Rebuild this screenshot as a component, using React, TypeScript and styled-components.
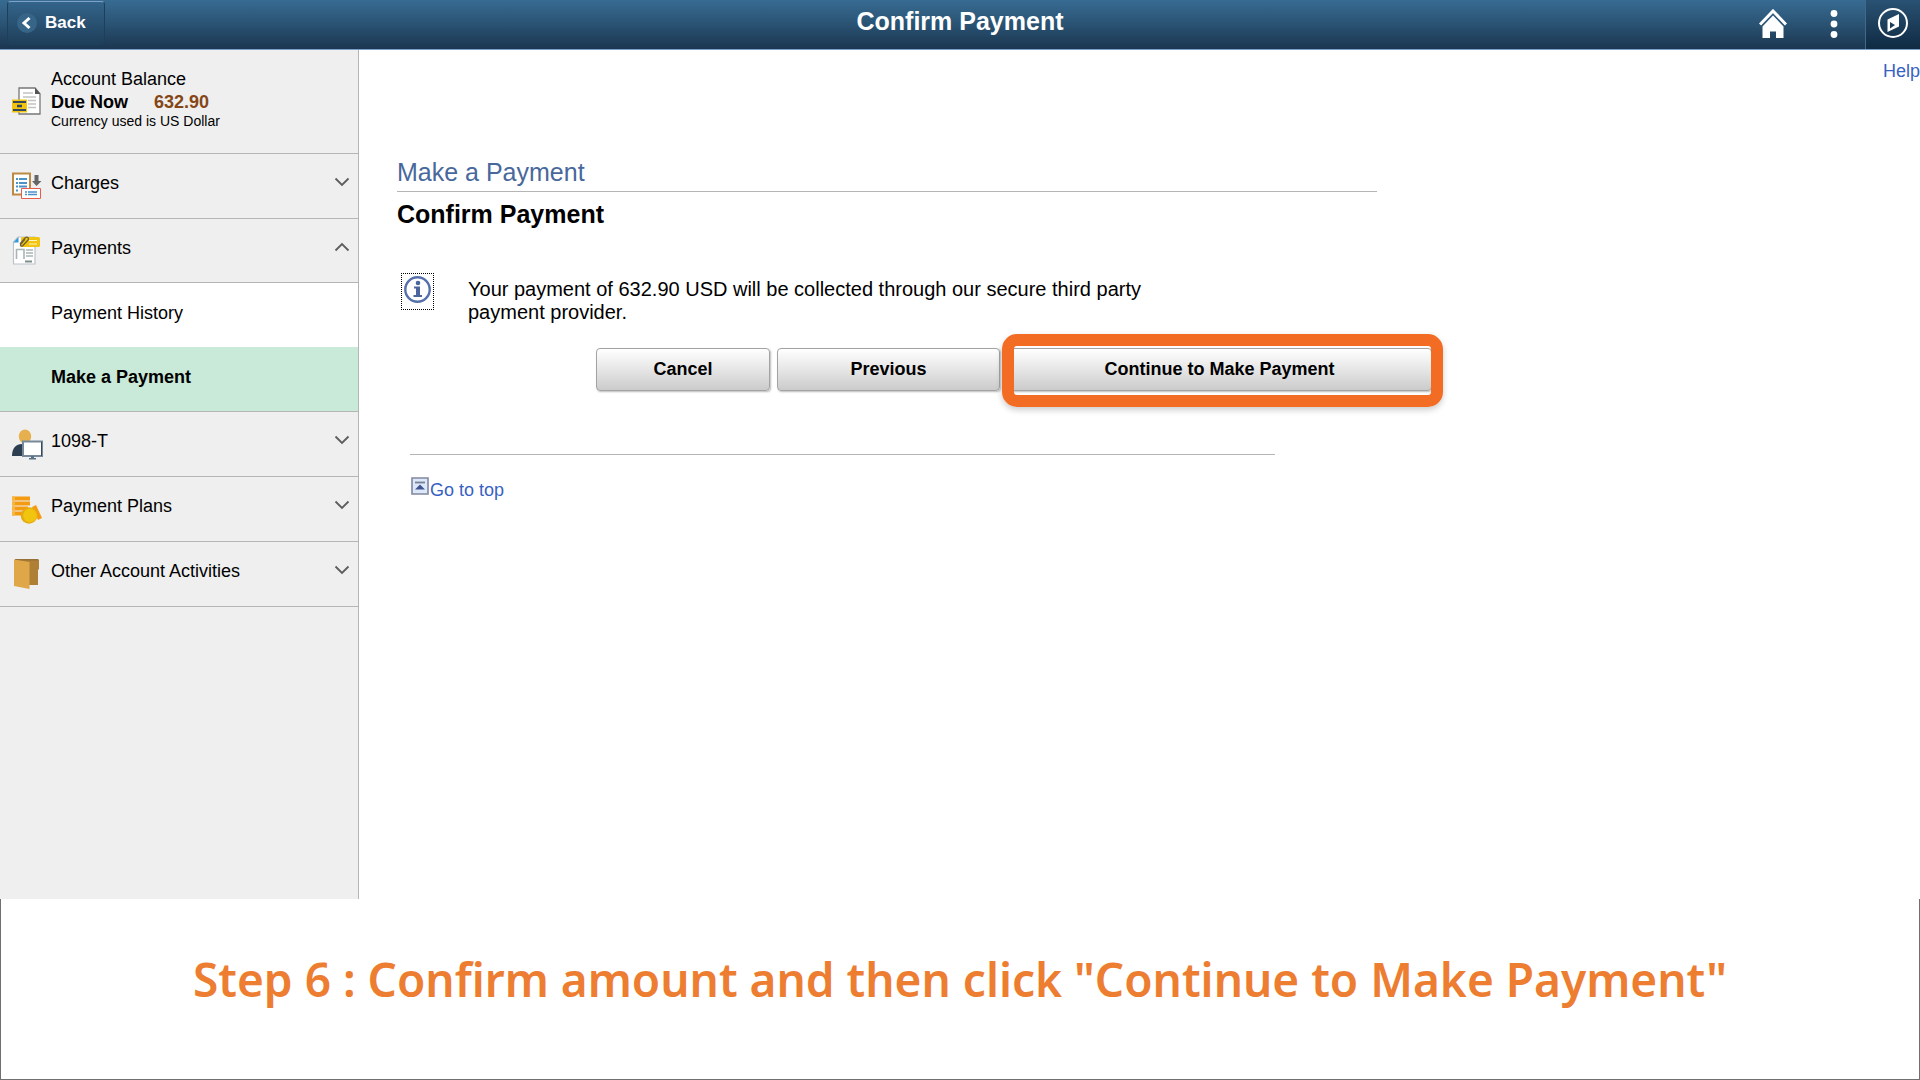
import React from "react";
import styled, { createGlobalStyle } from "styled-components";

const GlobalStyle = createGlobalStyle`
  *, *::before, *::after { box-sizing: border-box; }
  body {
    margin: 0;
    background: #fff;
    color: #000;
    font-family: "Liberation Sans", Arial, sans-serif;
    font-size: 18px;
  }
  button { font-family: inherit; color: inherit; cursor: pointer; }
  h1, h2, p, ul { margin: 0; padding: 0; }
  svg { display: block; flex: none; }
`;

const Page = styled.div`
  min-height: 100vh;
  display: flex;
  flex-direction: column;
`;

const Header = styled.header`
  display: grid;
  grid-template-columns: 1fr auto 1fr;
  height: 50px;
  background: linear-gradient(#386b92, #2b5576 45%, #1b3650);
  border-bottom: 1px solid #7c9fc9;
  color: #fff;
`;

const BackButton = styled.button`
  display: flex;
  align-items: center;
  gap: 8px;
  width: 98px;
  height: 44px;
  margin: 1px 0 0 7px;
  padding: 0 0 0 9px;
  border: 1px solid #1d3f5c;
  border-top-color: #7fa3c8;
  border-radius: 4px;
  background: linear-gradient(#33648a, #1f3f5b);
  color: #fff;
  font-size: 17px;
  line-height: 22px;
  font-weight: 700;
`;

const HeaderTitle = styled.h1`
  font-size: 25px;
  line-height: 42px;
  font-weight: 700;
`;

const HeaderTools = styled.div`
  display: flex;
  justify-content: flex-end;
`;

const ToolButton = styled.button<{ $active?: boolean }>`
  display: flex;
  justify-content: center;
  align-items: center;
  width: ${(p) => (p.$active ? 55 : 61)}px;
  height: 49px;
  padding: ${(p) => (p.$active ? "0 0 3px" : "0 2px 2px 0")};
  border: 0;
  border-left: 1px solid ${(p) => (p.$active ? "#41698a" : "transparent")};
  background: ${(p) => (p.$active ? "linear-gradient(#2a5273, #0f2a43)" : "none")};
  color: #fff;
`;

const Body = styled.div`
  flex: 1;
  display: flex;
`;

const Sidebar = styled.nav`
  flex: none;
  width: 359px;
  background: #efefef;
  border-right: 1px solid #b5b5b5;
`;

const Balance = styled.section`
  display: flex;
  align-items: center;
  gap: 7px;
  padding: 18px 12px 25px;
  border-bottom: 1px solid #b5b5b5;
  line-height: 23px;
  & > svg { margin-top: 8px; }
`;

const Due = styled.p`
  display: flex;
  gap: 26px;
  font-weight: 700;
`;

const Amount = styled.span`
  color: #854616;
`;

const Note = styled.p`
  font-size: 14px;
  line-height: 14px;
`;

const Menu = styled.ul`
  list-style: none;
`;

const MenuButton = styled.button<{ $open?: boolean }>`
  display: flex;
  align-items: center;
  gap: 7px;
  width: 100%;
  height: ${(p) => (p.$open ? 64 : 65)}px;
  padding: 0 8px 0 12px;
  border: 0;
  border-bottom: 1px solid #b5b5b5;
  background: none;
  font-size: 18px;
  line-height: 20px;
  text-align: left;
`;

const MenuLabel = styled.span`
  flex: 1;
  padding-bottom: 6px;
`;

const ChevronBox = styled.span`
  padding-bottom: 8px;
`;

const SubMenu = styled.ul`
  list-style: none;
  border-bottom: 1px solid #b5b5b5;
`;

const SubLink = styled.a<{ $current?: boolean }>`
  display: flex;
  align-items: center;
  height: 64px;
  padding: 0 12px 4px 51px;
  background: ${(p) => (p.$current ? "#c9ead8" : "#fff")};
  color: #000;
  font-weight: ${(p) => (p.$current ? 700 : 400)};
  text-decoration: none;
`;

const Main = styled.main`
  flex: 1;
  min-width: 0;
  padding: 10px 0 0 38px;
`;

const HelpRow = styled.div`
  display: flex;
  justify-content: flex-end;
  line-height: 22px;
`;

const Link = styled.a`
  color: #3761c2;
  text-decoration: none;
`;

const PageTitle = styled.h2`
  max-width: 980px;
  margin-top: 75px;
  padding-bottom: 4px;
  border-bottom: 1px solid #b5b5b5;
  color: #48689c;
  font-size: 25px;
  line-height: 30px;
  font-weight: 400;
`;

const StepTitle = styled.h2`
  margin-top: 7px;
  font-size: 25px;
  line-height: 30px;
  font-weight: 700;
`;

const Message = styled.div`
  display: flex;
  align-items: flex-start;
  gap: 34px;
  margin: 44px 0 0 4px;
`;

const InfoFrame = styled.span`
  width: 33px;
  height: 37px;
  padding: 2px;
  border: 1px dotted #000;
`;

const MessageText = styled.p`
  max-width: 700px;
  padding-top: 5px;
  font-size: 20px;
  line-height: 23px;
`;

const Actions = styled.div`
  display: flex;
  gap: 7px;
  margin: 24px 0 0 199px;
`;

const ActionButton = styled.button<{ $width: number }>`
  width: ${(p) => p.$width}px;
  height: 43px;
  padding: 0;
  border: 1px solid #a3a3a3;
  border-radius: 4px;
  background: linear-gradient(#fff, #e6e6e6 50%, #cbcbcb);
  box-shadow: 1px 1px 2px #bbb;
  font-size: 18px;
  font-weight: 700;
`;

const Highlighted = styled.div`
  position: relative;
  &::after {
    content: "";
    position: absolute;
    inset: -14px -11px -16px -5px;
    border: 12px solid #f36c24;
    border-radius: 15px;
    box-shadow: 0 3px 6px #0003;
    pointer-events: none;
  }
`;

const Divider = styled.hr`
  max-width: 865px;
  margin: 63px 0 22px 13px;
  border: 0;
  border-top: 1px solid #b5b5b5;
`;

const TopLink = styled(Link)`
  display: inline-flex;
  align-items: flex-start;
  gap: 1px;
  margin-left: 14px;
  line-height: 26px;
`;

const Caption = styled.footer`
  padding: 45px 20px 65px;
  border: 1px solid #6f7072;
  border-top: 0;
  color: #ed7d31;
  font-family: "Noto Sans", "Open Sans", sans-serif;
  font-size: 46px;
  line-height: 70px;
  font-weight: 600;
  text-align: center;
`;

const BalanceIcon = () => (
  <svg width="32" height="32" viewBox="0 0 32 32">
    <path d="M7 2h16l5 6v20H7z" fill="#fff" stroke="#777" strokeWidth="1.3" />
    <path d="M23 1.500l5.500 6.500H23z" fill="#555" />
    <path d="M11 7h10M11 11h13M16 14.500h8M16 18h8M16 21.500h8" stroke="#c2c2c2" strokeWidth="1.300" />
    <path d="M0 13.500h15v13H0z" fill="#f1c40f" />
    <path d="M1 16h13M1 24h13" stroke="#34495e" strokeWidth="2" />
    <path d="M5 20h5M7 20h2" stroke="#34495e" strokeWidth="2.500" />
  </svg>
);

const ChargesIcon = () => (
  <svg width="32" height="32" viewBox="0 0 32 32">
    <path d="M1 3.500h17v21H1z" fill="#fff" stroke="#bd8a43" strokeWidth="2" />
    <path d="M4 9h2M7 9h8M4 13h2M7 13h8M4 16.500h2M7 16.500h8M4 20.500h2" stroke="#4b93c6" strokeWidth="1.800" />
    <path d="M22.500 5h4v6h3L24.500 16 20 11h2.500z" fill="#666" />
    <path d="M9.500 18.500h19v10h-19z" fill="#fff" stroke="#e85c4c" />
    <path d="M13 22h2M16 22h9M13 24.500h2M16 24.500h9" stroke="#4b93c6" strokeWidth="1.600" />
  </svg>
);

const PaymentsIcon = () => (
  <svg width="32" height="32" viewBox="0 0 32 32">
    <path d="M6 2h17v27H1.500V7z" fill="#fff" stroke="#bdc3c7" strokeWidth="1.200" />
    <path d="M1.500 7.500L6.500 2v5.500z" fill="#3498db" />
    <rect x="9" y="2" width="19" height="10" rx="1.500" fill="#f1c40f" />
    <path d="M17 5.500h8M17 9h8" stroke="#fff6c9" strokeWidth="1.200" />
    <path d="M4.500 24V14.500H12V24M14 15h7M14 18h7M14 21h7" fill="none" stroke="#a9b4b7" strokeWidth="1.600" />
    <path d="M13 26.500h7" stroke="#7f8c8d" strokeWidth="2" />
    <path d="M8 9l5-6c2-2 4.500 0 3 2l-5 5.500c-1.500 1.500-3.500 0-2-1.500l4-5" fill="none" stroke="#726033" strokeWidth="1.300" />
  </svg>
);

const PersonIcon = () => (
  <svg width="32" height="32" viewBox="0 0 32 32">
    <path d="M0 28c0-8 4-12 10-12h3v12z" fill="#2c3e50" />
    <ellipse cx="13" cy="8.500" rx="6.200" ry="7" fill="#e6b04f" />
    <path d="M11 13.500h19v14.500H11z" fill="#fff" stroke="#75899a" strokeWidth="2" />
    <path d="M29.500 14v14" stroke="#34495e" />
    <path d="M19 28h3v2h2v1.500h-7V30h2z" fill="#5b7386" />
  </svg>
);

const CoinsIcon = () => (
  <svg width="32" height="32" viewBox="0 0 32 32">
    <path d="M0 5.500h18M0 10.500h18M0 15.500h16M0 20.500h14" stroke="#f39c12" strokeWidth="4" />
    <path d="M0 5.500h3M0 10.500h3M0 15.500h3M0 20.500h3" stroke="#f7b640" strokeWidth="4" />
    <path d="M22 13l6 13" stroke="#f39c12" strokeWidth="4.500" />
    <circle cx="17" cy="22.500" r="8.300" fill="#e5ab12" />
    <circle cx="18" cy="22.500" r="6.800" fill="#f1c40f" />
  </svg>
);

const FolderIcon = () => (
  <svg width="32" height="32" viewBox="0 0 32 32">
    <path d="M3 1.500h24v10h-1V27H12z" fill="#ae7f34" />
    <path d="M3 1h23v1.500H3z" fill="#967039" />
    <path d="M2 1.500L17.500 4v27L2 28z" fill="#dfa748" />
  </svg>
);

const Chevron = ({ up }: { up?: boolean }) => (
  <svg width="16" height="10" viewBox="0 0 16 10">
    <path d={up ? "M1.500 8.500L8 2l6.500 6.500" : "M1.500 1.500L8 8l6.500-6.500"} fill="none" stroke="#5d5d5d" strokeWidth="1.800" />
  </svg>
);

const BackIcon = () => (
  <svg width="20" height="20" viewBox="0 0 20 20">
    <circle cx="10" cy="10" r="10" fill="#366587" />
    <path d="M12.500 5L7 10l5.500 5" fill="none" stroke="#fff" strokeWidth="3" />
  </svg>
);

const HomeIcon = () => (
  <svg width="28" height="30" viewBox="0 0 28 30">
    <path d="M1 15.500L14 2l13 13.500" fill="none" stroke="#fff" strokeWidth="3" />
    <path d="M14 6.500l10.500 11V29H17v-6.500h-6V29H3.500V17.500z" fill="#fff" />
  </svg>
);

const DotsIcon = () => (
  <svg width="8" height="30" viewBox="0 0 8 30" fill="#fff">
    <circle cx="4" cy="4.500" r="3.400" />
    <circle cx="4" cy="15" r="3.400" />
    <circle cx="4" cy="25.500" r="3.400" />
  </svg>
);

const CompassIcon = () => (
  <svg width="30" height="30" viewBox="0 0 30 30">
    <circle cx="15" cy="15" r="14" fill="none" stroke="#fff" strokeWidth="2" />
    <path fillRule="evenodd" d="M21 6v12.500L9.500 24V11.500zM12 14v6.500l5-3.500z" fill="#fff" />
  </svg>
);

const InfoIcon = () => (
  <svg width="27" height="27" viewBox="0 0 27 27">
    <circle cx="13.500" cy="13.500" r="12.200" fill="#fff" stroke="#5770ab" strokeWidth="2.400" />
    <circle cx="14" cy="7" r="2.300" fill="#4d659f" />
    <path d="M10 10.500h6V19h2v2H9.500v-2h2.500v-6.500h-2z" fill="#4d659f" />
  </svg>
);

const TopIcon = () => (
  <svg width="18" height="18" viewBox="0 0 18 18">
    <path d="M1 1h16v16H1z" fill="#dce8fa" stroke="#8088a0" strokeWidth="1.600" />
    <path d="M4 5.500h10" stroke="#777f94" strokeWidth="1.800" />
    <path d="M9 7.500l5 5H4z" fill="#40558e" />
  </svg>
);

const MenuItem = ({ icon, label, open, children }: {
  icon: React.ReactNode; label: string; open?: boolean; children?: React.ReactNode;
}) => (
  <li>
    <MenuButton type="button" $open={open} aria-expanded={!!open}>
      {icon}
      <MenuLabel>{label}</MenuLabel>
      <ChevronBox><Chevron up={open} /></ChevronBox>
    </MenuButton>
    {children}
  </li>
);

export default function App() {
  return (
    <Page>
      <GlobalStyle />
      <Header>
        <BackButton type="button"><BackIcon />Back</BackButton>
        <HeaderTitle>Confirm Payment</HeaderTitle>
        <HeaderTools>
          <ToolButton type="button" aria-label="Home"><HomeIcon /></ToolButton>
          <ToolButton type="button" aria-label="Actions"><DotsIcon /></ToolButton>
          <ToolButton type="button" aria-label="Navigator" $active><CompassIcon /></ToolButton>
        </HeaderTools>
      </Header>
      <Body>
        <Sidebar>
          <Balance>
            <BalanceIcon />
            <div>
              <p>Account Balance</p>
              <Due>Due Now <Amount>632.90</Amount></Due>
              <Note>Currency used is US Dollar</Note>
            </div>
          </Balance>
          <Menu>
            <MenuItem icon={<ChargesIcon />} label="Charges" />
            <MenuItem icon={<PaymentsIcon />} label="Payments" open>
              <SubMenu>
                <li><SubLink href="#history">Payment History</SubLink></li>
                <li><SubLink href="#payment" $current aria-current="page">Make a Payment</SubLink></li>
              </SubMenu>
            </MenuItem>
            <MenuItem icon={<PersonIcon />} label="1098-T" />
            <MenuItem icon={<CoinsIcon />} label="Payment Plans" />
            <MenuItem icon={<FolderIcon />} label="Other Account Activities" />
          </Menu>
        </Sidebar>
        <Main>
          <HelpRow><Link href="#help">Help</Link></HelpRow>
          <PageTitle>Make a Payment</PageTitle>
          <StepTitle>Confirm Payment</StepTitle>
          <Message>
            <InfoFrame><InfoIcon /></InfoFrame>
            <MessageText>
              Your payment of 632.90 USD will be collected through our secure third party payment provider.
            </MessageText>
          </Message>
          <Actions>
            <ActionButton type="button" $width={174}>Cancel</ActionButton>
            <ActionButton type="button" $width={223}>Previous</ActionButton>
            <Highlighted>
              <ActionButton type="button" $width={425}>Continue to Make Payment</ActionButton>
            </Highlighted>
          </Actions>
          <Divider />
          <TopLink href="#top"><TopIcon />Go to top</TopLink>
        </Main>
      </Body>
      <Caption>Step 6 : Confirm amount and then click "Continue to Make Payment"</Caption>
    </Page>
  );
}
